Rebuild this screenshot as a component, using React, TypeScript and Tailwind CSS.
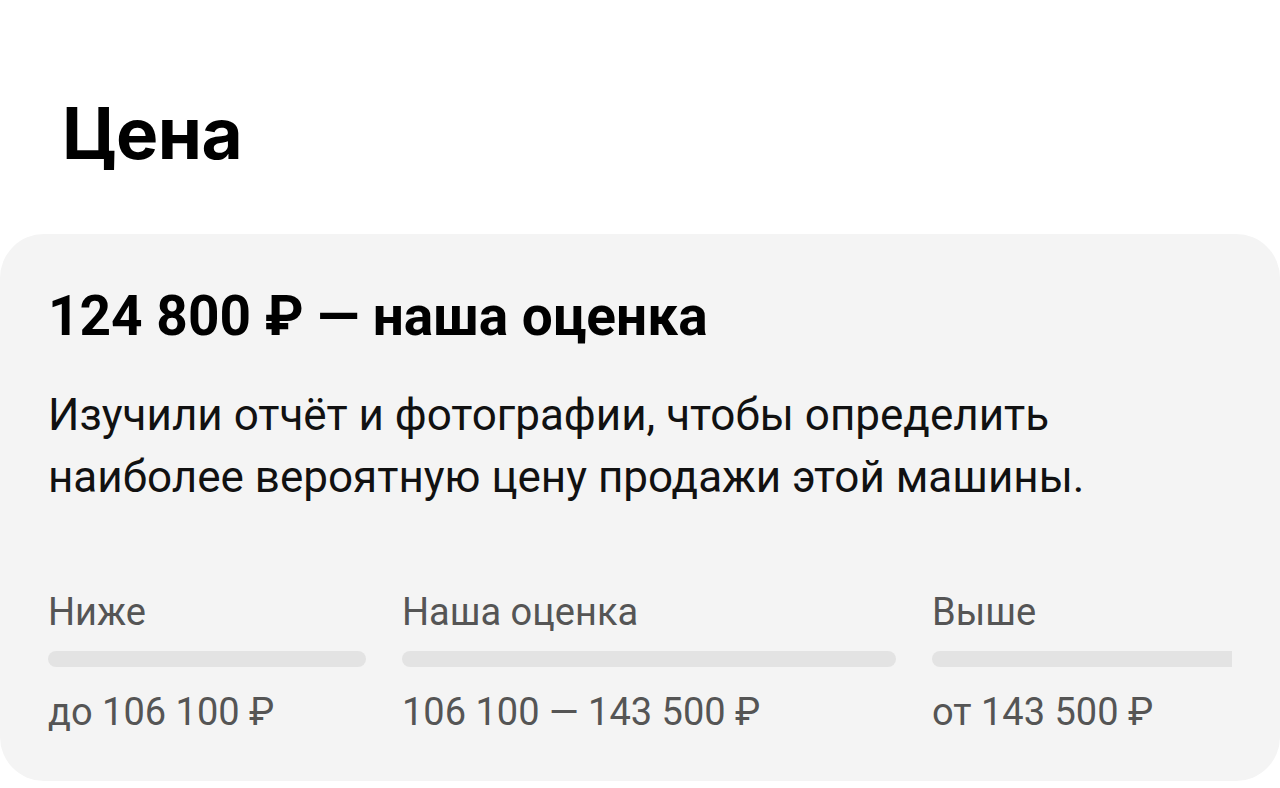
import React from 'react';

const ranges = [
  { label: 'Ниже', value: 'до 106 100 ₽', width: 'w-[318px]' },
  { label: 'Наша оценка', value: '106 100 — 143 500 ₽', width: 'w-[494px]' },
  { label: 'Выше', value: 'от 143 500 ₽', width: 'w-[340px]' },
];

export default function App() {
  return (
    <div className="h-[788px] overflow-hidden bg-white font-['Roboto',sans-serif] text-black">
      {/* Section heading */}
      <h1 className="pt-[98px] pl-[62px] font-['Inter',sans-serif] text-[71px] font-bold leading-[70px] tracking-[-0.5px]">
        Цена
      </h1>

      {/* Estimate card */}
      <div className="mt-[66px] rounded-[44px] bg-[#f4f4f4] pt-[54px] pb-[47px] pl-[48px] pr-[48px]">
        <h2 className="text-[55px] font-bold leading-[56px]">124 800 ₽ — наша оценка</h2>
        <p className="mt-[40px] text-[44px] leading-[62px] text-[#111]">
          Изучили отчёт и фотографии, чтобы определить
          <br />
          наиболее вероятную цену продажи этой машины.
        </p>

        <div className="mt-[82px] flex gap-[36px] overflow-hidden">
          {ranges.map((r) => (
            <div key={r.label} className={`${r.width} shrink-0`}>
              <div className="text-[38px] leading-[44px] text-[#555]">{r.label}</div>
              <div className="mt-[17px] h-[16px] rounded-full bg-[#e3e3e3]" />
              <div className="mt-[23px] text-[38px] leading-[44px] text-[#555]">{r.value}</div>
            </div>
          ))}
        </div>
      </div>
    </div>
  );
}
